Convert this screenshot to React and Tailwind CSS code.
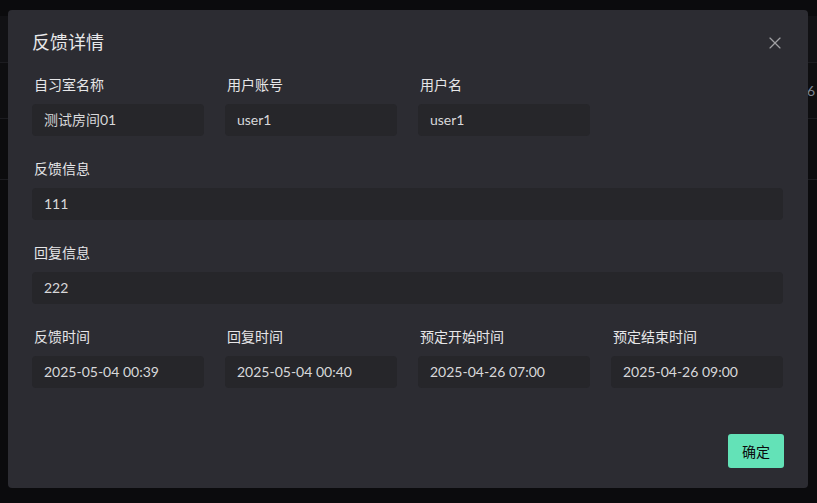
import { X } from "lucide-react";

const font = { fontFamily: '"Lato", "Noto Sans CJK SC", sans-serif' };

const Field = ({ label, value, wide }) => (
  <div className={wide ? "col-span-4" : ""}>
    <div className="h-[20px] pl-[2px] text-[14px] leading-[20px] text-[#e6e6e8]">
      {label}
    </div>
    <div className="mt-[9px] flex h-[32px] items-center rounded-[4px] bg-[#26262a] px-[12px] pb-[2px] text-[14px] text-[#d8d8da]">
      {value}
    </div>
  </div>
);

const App = () => {
  return (
    <div className="relative h-[503px] w-[817px] overflow-hidden bg-[#0b0b0d]" style={font}>
      {/* page behind the overlay */}
      <div className="flex flex-col">
        <div className="h-[16px]" />
        <div className="h-[47px] border-b border-[#1c1c20] bg-[#111114]" />
        <div className="flex h-[56px] items-center justify-end border-b border-[#1c1c20] bg-[#0e0e10] pr-[2px] text-[14px] text-[#7d8592]">
          6
        </div>
        <div className="h-[61px] border-b border-[#1c1c20] bg-[#0c0c0e]" />
      </div>

      <div className="absolute left-[8px] top-[10px] flex h-[478px] w-[800px] flex-col rounded-[4px] bg-[#2c2c32] px-[24px] pt-[20px]">
        <div className="flex h-[24px] items-center justify-between">
          <h2 className="text-[18px] leading-[24px] text-[#e8e8ea]">反馈详情</h2>
          <X className="mr-[-1px] mt-[2px] h-[20px] w-[20px] text-[#a0a0a4]" strokeWidth={1.4} />
        </div>

        <div className="mt-[21px] grid grid-cols-[repeat(4,172px)] gap-x-[21px] gap-y-[23px]">
          <Field label="自习室名称" value="测试房间01" />
          <Field label="用户账号" value="user1" />
          <Field label="用户名" value="user1" />
          <div />
          <Field label="反馈信息" value="111" wide />
          <Field label="回复信息" value="222" wide />
          <Field label="反馈时间" value="2025-05-04 00:39" />
          <Field label="回复时间" value="2025-05-04 00:40" />
          <Field label="预定开始时间" value="2025-04-26 07:00" />
          <Field label="预定结束时间" value="2025-04-26 09:00" />
        </div>

        <div className="mt-[46px] flex justify-end">
          <button className="h-[34px] w-[56px] rounded-[3px] bg-[#63e2b7] text-[14px] text-[#0b0b0d]">
            确定
          </button>
        </div>
      </div>
    </div>
  );
};

export default App;
